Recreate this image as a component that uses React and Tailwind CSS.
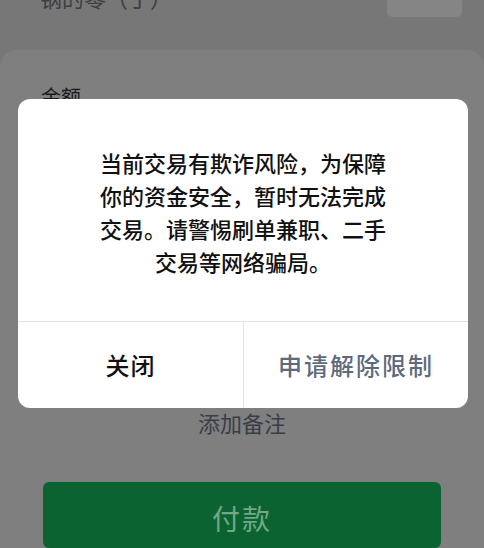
import React from 'react';

const cjk = { fontFamily: '"Noto Sans CJK SC", "Noto Sans", sans-serif' };

function RiskDialog() {
  return (
    <div className="absolute left-[18px] top-[99px] w-[450px] h-[309px] bg-white rounded-[12px] flex flex-col overflow-hidden">
      <div className="h-[222px] flex items-center justify-center px-[30px]">
        <p className="text-center text-[22px] leading-[33px] font-medium text-[#111] pt-[4px]">
          当前交易有欺诈风险，为保障
          <br />
          你的资金安全，暂时无法完成
          <br />
          交易。请警惕刷单兼职、二手
          <br />
          交易等网络骗局。
        </p>
      </div>
      <div className="flex-1 flex border-t border-[#e3e3e3]">
        <button className="w-[225px] flex items-center justify-center text-[24px] font-medium tracking-[1px] text-[#111]">
          关闭
        </button>
        <button className="flex-1 flex items-center justify-center border-l border-[#e3e3e3] text-[24px] font-medium tracking-[2px] text-[#5d6b7c]">
          申请解除限制
        </button>
      </div>
    </div>
  );
}

export default function App() {
  return (
    <div className="relative w-[484px] h-[548px] overflow-hidden bg-[#777777]" style={cjk}>
      {/* top row, partly scrolled off */}
      <div className="h-[50px] flex justify-between items-start px-[40px]">
        <span className="-mt-[18px] text-[22px] leading-[30px] text-[#3e3e3e]">钢的零（丁）</span>
        <div className="-mt-[10px] mr-[-18px] w-[75px] h-[27px] rounded-[5px] bg-[#858585]" />
      </div>

      {/* payment card */}
      <div className="h-[498px] bg-[#7f7f7f] rounded-t-[16px] flex flex-col">
        <div className="pt-[35px] px-[41px] text-[20px] leading-[24px] text-[#1a1a1a]">金额</div>
        <div className="mt-[298px] text-center text-[22px] leading-[30px] text-[#3a3d46]">添加备注</div>
        <div className="mt-[45px] mx-[43px] h-[80px] rounded-[6px] bg-[#0b6332] flex justify-center pt-[17px]">
          <span className="text-[28px] leading-[38px] tracking-[2px] text-[#72a884]">付款</span>
        </div>
      </div>

      <RiskDialog />
    </div>
  );
}
